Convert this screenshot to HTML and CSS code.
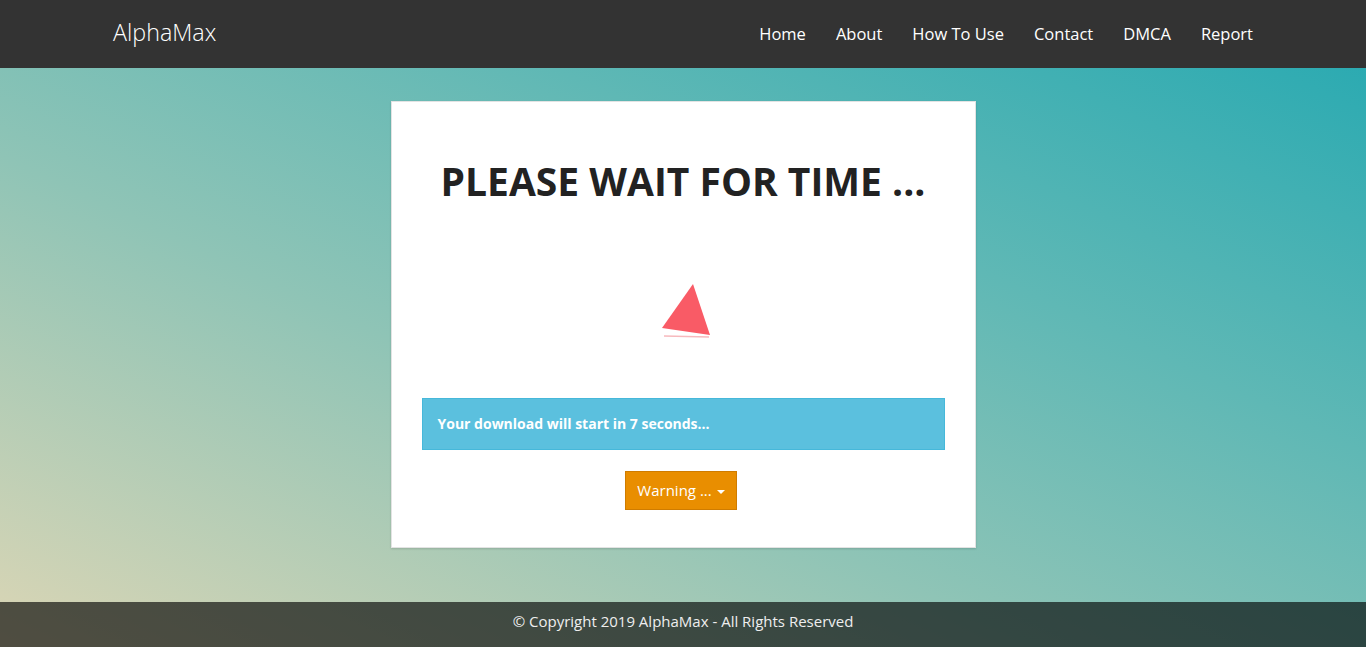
FILE: index.html
```html
<!DOCTYPE html>
<html lang="en">
<head>
<meta charset="UTF-8">
<meta name="viewport" content="width=device-width, initial-scale=1.0">
<title>AlphaMax - Please wait</title>
<link rel="stylesheet" href="styles.css">
</head>
<body>

<!-- Top navigation -->
<div class="navbar">
  <div class="container nav-inner">
    <a class="brand" href="#">AlphaMax</a>
    <ul class="nav-links">
      <li><a href="#">Home</a></li>
      <li><a href="#">About</a></li>
      <li><a href="#">How To Use</a></li>
      <li><a href="#">Contact</a></li>
      <li><a href="#">DMCA</a></li>
      <li><a href="#">Report</a></li>
    </ul>
  </div>
</div>

<!-- Main -->
<div class="main">
  <div class="wait-box">
    <h1>PLEASE WAIT FOR TIME ...</h1>

    <div class="spinner">
      <svg width="60" height="60" viewBox="0 0 60 60">
        <polygon points="32,0 1,44 49,51" fill="#f95b66"/>
        <line x1="3" y1="52" x2="48" y2="53" stroke="#f7b9bd" stroke-width="1.5"/>
      </svg>
    </div>

    <div class="alert-info">Your download will start in 7 seconds...</div>

    <div class="btn-row">
      <button class="btn-warning">Warning ... <span class="caret"></span></button>
    </div>
  </div>
</div>

<!-- Footer -->
<div class="footer">
  <p>&copy; Copyright 2019 AlphaMax - All Rights Reserved</p>
</div>

</body>
</html>
```

FILE: styles.css
```css
 html, body {
   height: 100%;
 }
 body {
   font-family: "Open Sans", Arial, sans-serif;
   margin: 0;
   padding: 0;
   min-height: 100vh;
   display: flex;
   flex-direction: column;
   background: linear-gradient(to top right, #dcd6b5 0%, #8fc4b6 38%, #5fb8b5 65%, #23a8b1 100%);
 }
 .container {
   width: 1140px;
   margin: 0 auto;
 }
 .navbar {
   background-color: #333333;
   height: 68px;
 }
 .nav-inner {
   display: flex;
   justify-content: space-between;
   align-items: center;
   height: 68px;
 }
 .brand {
   color: #fff;
   font-size: 23.3px;
   font-weight: 300;
   text-decoration: none;
   margin-top: -5px;
 }
 .nav-links {
   list-style: none;
   margin: -2px -15px 0 0;
   padding: 0;
   display: flex;
 }
 .nav-links a {
   display: block;
   color: #fff;
   font-size: 16.5px;
   text-decoration: none;
   padding: 0 15px;
 }
 .main {
   flex: 1;
   padding-top: 33px;
 }
 .wait-box {
   width: 523px;
   margin: 0 auto;
   background: #fff;
   padding: 0 30px 37px;
   border: 1px solid #e3e3e3;
   box-shadow: 0 1px 2px rgba(0, 0, 0, 0.15);
 }
 .wait-box h1 {
   margin: 0;
   padding-top: 55px;
   text-align: center;
   font-size: 39px;
   font-weight: 700;
   color: #222;
   line-height: 48px;
 }
 .spinner {
   display: flex;
   justify-content: center;
   padding: 79px 0 0 16px;
   height: 60px;
   margin-bottom: 54px;
 }
 .alert-info {
   background-color: #5bc0de;
   border: 1px solid #46b8da;
   color: #fff;
   font-weight: 700;
   font-size: 14px;
   padding: 15px 15px;
   line-height: 20px;
 }
 .btn-row {
   text-align: center;
   margin-top: 21px;
   padding-right: 4px;
 }
 .btn-warning {
   font-family: "Open Sans", Arial, sans-serif;
   background-color: #e98e00;
   border: 1px solid #cf7c00;
   color: #fff;
   font-size: 15px;
   padding: 8px 11px;
   line-height: 21px;
   border-radius: 0;
 }
 .caret {
   display: inline-block;
   width: 0;
   height: 0;
   border-top: 4px solid #fff;
   border-left: 4px solid transparent;
   border-right: 4px solid transparent;
   vertical-align: middle;
   margin-left: 1px;
 }
 .footer {
   background-color: rgba(0, 0, 0, 0.64);
   height: 45px;
   text-align: center;
 }
 .footer p {
   margin: 0;
   line-height: 38px;
   color: #eee;
   font-size: 15px;
 }
```
